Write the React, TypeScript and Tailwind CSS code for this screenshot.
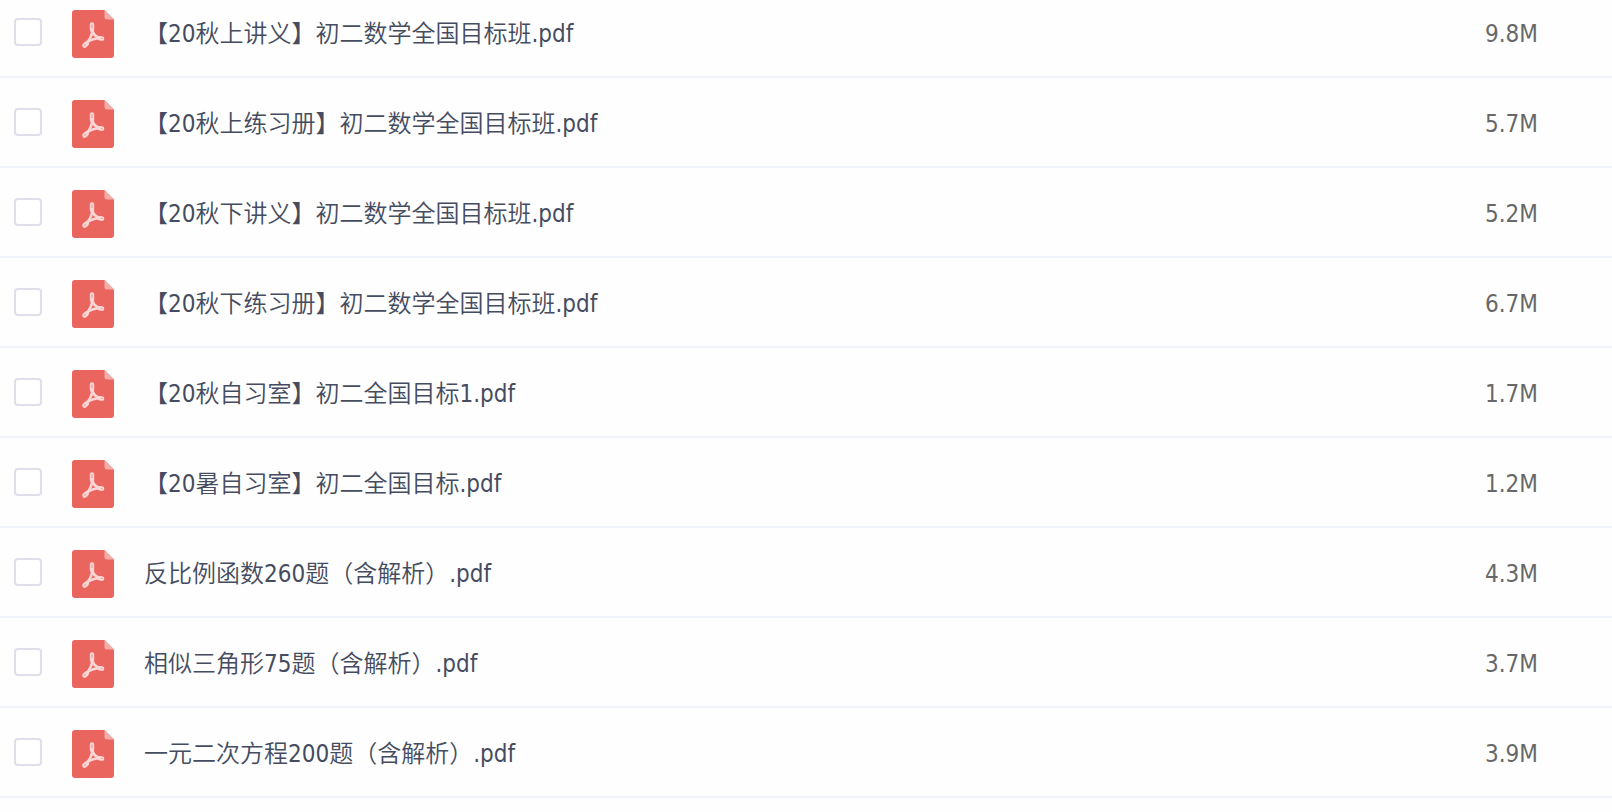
import React from "react";

type FileEntry = { name: string; size: string };

const files: FileEntry[] = [
  { name: "【20秋上讲义】初二数学全国目标班.pdf", size: "9.8M" },
  { name: "【20秋上练习册】初二数学全国目标班.pdf", size: "5.7M" },
  { name: "【20秋下讲义】初二数学全国目标班.pdf", size: "5.2M" },
  { name: "【20秋下练习册】初二数学全国目标班.pdf", size: "6.7M" },
  { name: "【20秋自习室】初二全国目标1.pdf", size: "1.7M" },
  { name: "【20暑自习室】初二全国目标.pdf", size: "1.2M" },
  { name: "反比例函数260题（含解析）.pdf", size: "4.3M" },
  { name: "相似三角形75题（含解析）.pdf", size: "3.7M" },
  { name: "一元二次方程200题（含解析）.pdf", size: "3.9M" },
];

function PdfIcon() {
  return (
    <svg viewBox="0 0 43 48" className="block h-12 w-[43px]" aria-hidden="true">
      <path d="M3 0H32.5L42 9.5V45a3 3 0 0 1-3 3H3a3 3 0 0 1-3-3V3a3 3 0 0 1 3-3Z" fill="#eb655f" />
      <path d="M32.5 0L42 9.5H35a2.5 2.5 0 0 1-2.5-2.5Z" fill="#f3aeaa" />
      <g fill="none" stroke="#fad6d4" strokeLinecap="round" strokeLinejoin="round">
        <path d="M20 14.4V20" strokeWidth="4.4" />
        <path d="M20.4 20C20.8 23.8 23.6 26.8 28 28" strokeWidth="2.6" />
        <path d="M20.4 20C20.2 25 17.8 29.6 13.8 34" strokeWidth="2.6" />
        <path d="M15.6 32C19 29.6 23.5 28.3 28 28.2" strokeWidth="2.6" />
        <path d="M27.4 28.2L30 28.6" strokeWidth="4.6" />
        <path d="M14.6 33.6L12.6 35.4" strokeWidth="4.8" />
      </g>
      <path d="M29.6 28.5h.6M12.7 35.2l.6-.5M20 14.8v2.6" fill="none" stroke="#f19b97" strokeWidth="1.2" strokeLinecap="round" />
    </svg>
  );
}

function FileRow({ file, index }: { file: FileEntry; index: number }) {
  const id = `file-${index}`;
  return (
    <tr className="h-[90px] border-b-2 border-[#f2f4fb]">
      <td className="w-[72px] pl-3.5">
        <input
          id={id}
          type="checkbox"
          aria-label={file.name}
          className="block size-7 appearance-none rounded-sm border-2 border-[#dfdfeb] bg-white checked:bg-[#eb655f]"
        />
      </td>
      <td className="w-[72px] pt-1">
        <PdfIcon />
      </td>
      <td className="whitespace-nowrap pt-1 text-[#454c5f]">
        <label htmlFor={id}>{file.name}</label>
      </td>
      <td className="w-[127px] pt-1 text-[#686868]">{file.size}</td>
    </tr>
  );
}

export default function App() {
  return (
    <main className="min-h-screen overflow-hidden bg-[#fefefe]">
      <table className="-mt-[13px] w-full border-collapse text-left font-['DejaVu_Sans_Condensed','Noto_Sans_CJK_SC',sans-serif] text-2xl font-[350]">
        <tbody>
          {files.map((file, index) => (
            <FileRow key={file.name} file={file} index={index} />
          ))}
        </tbody>
      </table>
    </main>
  );
}
